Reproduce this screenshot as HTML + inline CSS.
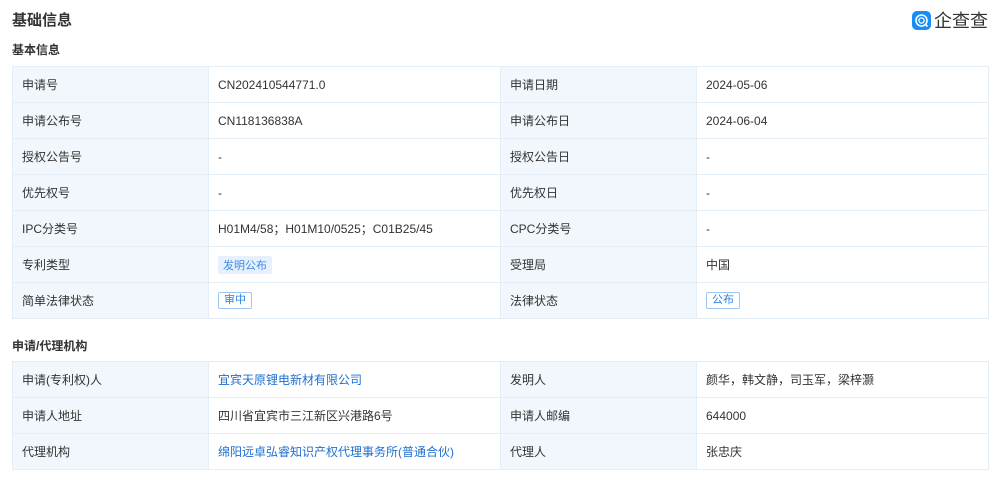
<!DOCTYPE html><html><head><meta charset="utf-8"><style>
body{margin:0;width:1000px;height:479px;overflow:hidden;background:#fff;font-family:"Liberation Sans","Noto Sans CJK SC",sans-serif;color:#333;font-size:12px}
.h1{position:absolute;left:12px;top:9px;font-size:15px;font-weight:bold;color:#333}
.h2{position:absolute;left:12px;font-size:12px;font-weight:bold;color:#333}
table{position:absolute;left:12px;width:976px;border-collapse:collapse;table-layout:fixed}
td{border:1px solid #e4eef7;height:35px;padding:0 0 0 9px;font-size:12px;color:#333}
td.l{background:#f1f7fc}
a{color:#1f6fd0;text-decoration:none}
.t1{display:inline-block;background:#e7f1fd;color:#3c8ae6;padding:1px 5px;border-radius:2px;font-size:11px}
.t2{display:inline-block;border:1px solid #9cc6f4;color:#2f80e0;padding:0 5px;border-radius:2px;font-size:11px;line-height:15px}
.logo{position:absolute;left:912px;top:7px;display:flex;align-items:center}
.ic{width:19px;height:19px;background:#1a8cf5;border-radius:5px}
</style></head><body>
<div class="h1">基础信息</div>
<div class="logo"><svg class="ic" viewBox="0 0 19 19"><rect width="19" height="19" rx="5" fill="#1a8cf5"/><circle cx="9.5" cy="9.5" r="5.5" fill="none" stroke="#fff" stroke-width="1.6"/><circle cx="9.5" cy="9.5" r="2.6" fill="none" stroke="#fff" stroke-width="1.3"/><path d="M13 13 L15.5 15.5" stroke="#fff" stroke-width="1.6"/></svg><span style="font-size:18px;color:#333;margin-left:3px;letter-spacing:0px">企查查</span></div>
<div class="h2" style="top:41px">基本信息</div>
<table style="top:66px"><colgroup><col style="width:196px"><col style="width:292px"><col style="width:196px"><col style="width:292px"></colgroup>
<tr><td class="l">申请号</td><td>CN202410544771.0</td><td class="l">申请日期</td><td>2024-05-06</td></tr>
<tr><td class="l">申请公布号</td><td>CN118136838A</td><td class="l">申请公布日</td><td>2024-06-04</td></tr>
<tr><td class="l">授权公告号</td><td>-</td><td class="l">授权公告日</td><td>-</td></tr>
<tr><td class="l">优先权号</td><td>-</td><td class="l">优先权日</td><td>-</td></tr>
<tr><td class="l">IPC分类号</td><td>H01M4/58；H01M10/0525；C01B25/45</td><td class="l">CPC分类号</td><td>-</td></tr>
<tr><td class="l">专利类型</td><td><span class="t1">发明公布</span></td><td class="l">受理局</td><td>中国</td></tr>
<tr><td class="l">简单法律状态</td><td><span class="t2">审中</span></td><td class="l">法律状态</td><td><span class="t2">公布</span></td></tr>
</table>
<div class="h2" style="top:337px">申请/代理机构</div>
<table style="top:361px"><colgroup><col style="width:196px"><col style="width:292px"><col style="width:196px"><col style="width:292px"></colgroup>
<tr><td class="l">申请(专利权)人</td><td><a>宜宾天原锂电新材有限公司</a></td><td class="l">发明人</td><td>颜华，韩文静，司玉军，梁梓灏</td></tr>
<tr><td class="l">申请人地址</td><td>四川省宜宾市三江新区兴港路6号</td><td class="l">申请人邮编</td><td>644000</td></tr>
<tr><td class="l">代理机构</td><td><a>绵阳远卓弘睿知识产权代理事务所(普通合伙)</a></td><td class="l">代理人</td><td>张忠庆</td></tr>
</table>
</body></html>
